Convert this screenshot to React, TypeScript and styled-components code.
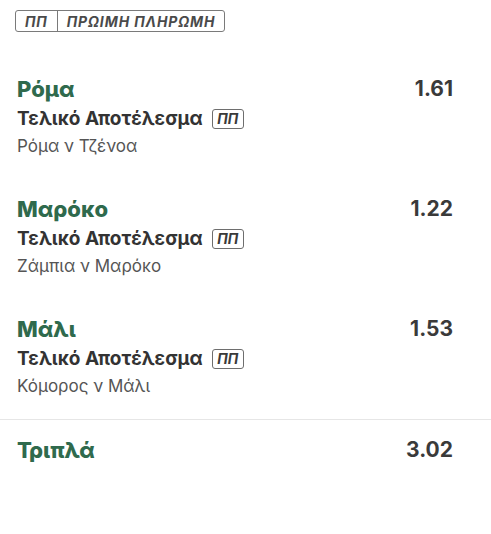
import React from "react";
import styled, { createGlobalStyle } from "styled-components";

const Global = createGlobalStyle`
  html, body { margin: 0; padding: 0; background: #fff; }
  body { font-family: Inter, "Noto Sans", sans-serif; -webkit-font-smoothing: antialiased; }
`;

const Page = styled.div`
  padding: 10px 38px 0 17px;
`;

const EarlyBadge = styled.div`
  display: inline-flex;
  align-items: stretch;
  height: 20px;
  border: 1px solid #7a7a7a;
  border-radius: 3px;
  margin-left: -2px;
  color: #4a4a4a;
  font-size: 14px;
  font-weight: 700;
  font-style: italic;
  letter-spacing: 0.9px;
`;

const BadgeCell = styled.span<{ $divider?: boolean }>`
  display: flex;
  align-items: center;
  padding: 0 9px;
  border-right: ${(p) => (p.$divider ? "1px solid #7a7a7a" : "none")};
`;

const List = styled.div`
  margin-top: 45px;
  display: flex;
  flex-direction: column;
  gap: 40px;
`;

const Item = styled.div`
  display: flex;
  justify-content: space-between;
  align-items: flex-start;
`;

const Info = styled.div`
  display: flex;
  flex-direction: column;
`;

const Name = styled.div`
  color: #2f6a4d;
  font-size: 22px;
  font-weight: 800;
  line-height: 24px;
`;

const Market = styled.div`
  margin-top: 6px;
  display: flex;
  align-items: center;
  gap: 9px;
  color: #333;
  font-size: 19px;
  font-weight: 700;
  line-height: 24px;
`;

const SmallBadge = styled.span`
  display: inline-flex;
  align-items: center;
  justify-content: center;
  width: 30px;
  height: 18px;
  border: 1px solid #6e6e6e;
  border-radius: 3px;
  color: #3a3a3a;
  font-size: 14px;
  font-style: italic;
  font-weight: 700;
`;

const Event = styled.div`
  margin-top: 4px;
  color: #555;
  font-size: 17px;
  line-height: 22px;
`;

const Odds = styled.div`
  color: #3a3a3a;
  font-size: 21px;
  font-weight: 700;
  line-height: 24px;
`;

const Divider = styled.hr`
  margin: 22px 0 0 0;
  border: none;
  border-top: 1px solid #e6e6e6;
`;

const Total = styled.div`
  display: flex;
  justify-content: space-between;
  align-items: center;
  padding: 18px 38px 0 17px;
`;

const selections = [
  { name: "Ρόμα", event: "Ρόμα ν Τζένοα", odds: "1.61" },
  { name: "Μαρόκο", event: "Ζάμπια ν Μαρόκο", odds: "1.22" },
  { name: "Μάλι", event: "Κόμορος ν Μάλι", odds: "1.53" },
];

export default function App() {
  return (
    <>
      <Global />
      <Page>
        <EarlyBadge>
          <BadgeCell $divider>ΠΠ</BadgeCell>
          <BadgeCell>ΠΡΩΙΜΗ ΠΛΗΡΩΜΗ</BadgeCell>
        </EarlyBadge>
        <List>
          {selections.map((s) => (
            <Item key={s.name}>
              <Info>
                <Name>{s.name}</Name>
                <Market>
                  Τελικό Αποτέλεσμα <SmallBadge>ΠΠ</SmallBadge>
                </Market>
                <Event>{s.event}</Event>
              </Info>
              <Odds>{s.odds}</Odds>
            </Item>
          ))}
        </List>
      </Page>
      <Divider />
      <Total>
        <Name>Τριπλά</Name>
        <Odds>3.02</Odds>
      </Total>
    </>
  );
}
